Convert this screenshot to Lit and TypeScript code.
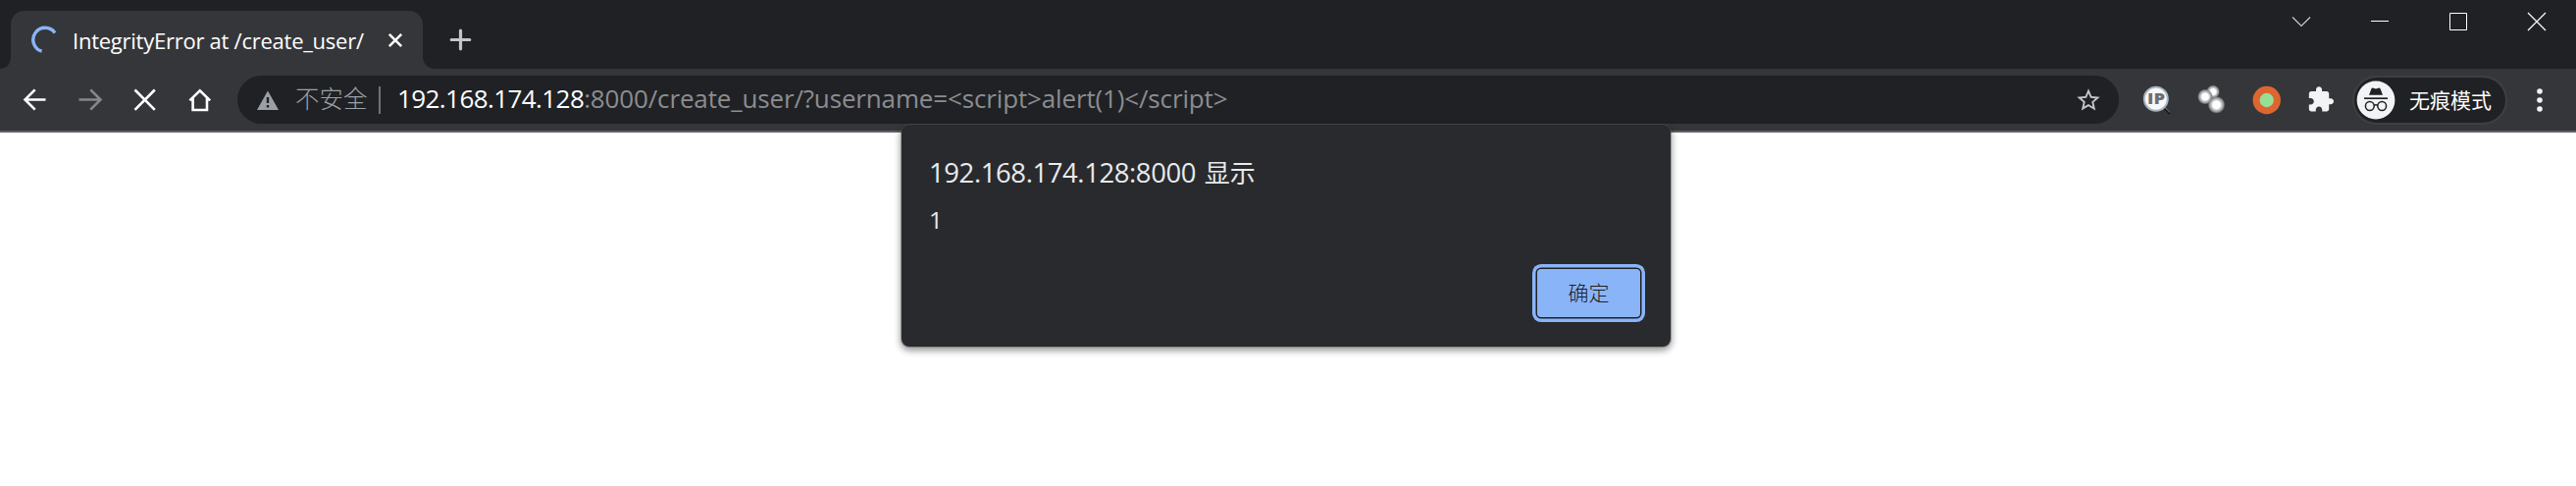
import { LitElement, html, css } from 'lit';
import { customElement, property } from 'lit/decorators.js';

const FONT = css`"Open Sans", "Noto Sans CJK SC", sans-serif`;

@customElement('tab-strip')
class TabStrip extends LitElement {
  @property() heading = '';

  static styles = css`
    :host { display: flex; height: 70px; background: #202124; font-family: ${FONT}; box-sizing: border-box; }
    svg { display: block; flex: none; }
    .foot { align-self: flex-end; color: #35363a; }
    .tab { width: 420px; margin-top: 11px; height: 59px; box-sizing: border-box; background: #35363a;
      border-radius: 14px 14px 0 0; display: flex; align-items: center; padding: 0 20px 0 20px; }
    .title { margin-left: 15px; width: 306px; white-space: nowrap; font-size: 22px; line-height: 30px; letter-spacing: -0.25px; color: #fff; }
    .close { margin-left: 15px; }
    .plus { margin: 29px 0 0 14px; }
    .controls { margin-left: auto; display: flex; gap: 60px; padding: 11px 30px 0 0; }
  `;

  render() {
    return html`
      <svg class="foot" width="11" height="13"><path d="M0 13C7 13 11 8 11 0V13Z" fill="currentColor" /></svg>
      <div class="tab">
        <svg width="28" height="30" viewBox="0 0 28 30">
          <path d="M25 7.5A12.2 12.2 0 1 0 11.6 26.2" fill="none" stroke="#8ab4f8" stroke-width="3.4" />
        </svg>
        <span class="title">${this.heading}</span>
        <svg class="close" width="16" height="16" viewBox="0 0 16 16">
          <path d="M1.8 1.8L14.2 14.2M14.2 1.8L1.8 14.2" stroke="#fff" stroke-width="2.6" />
        </svg>
      </div>
      <svg class="foot" width="13" height="13"><path d="M13 13C5 13 0 8 0 0V13Z" fill="currentColor" /></svg>
      <svg class="plus" width="23" height="23" viewBox="0 0 23 23">
        <path d="M11.5 2.2V20.8M2.2 11.5H20.8" stroke="#c3c5c8" stroke-width="3.2" stroke-linecap="round" />
      </svg>
      <div class="controls">
        <svg width="20" height="22" viewBox="0 0 20 22"><path d="M1 6.5L10 15.5L19 6.5" fill="none" stroke="#c9cacc" stroke-width="1.2" /></svg>
        <svg width="20" height="22" viewBox="0 0 20 22"><path d="M1 10.5H19" stroke="#fff" /></svg>
        <svg width="20" height="22" viewBox="0 0 20 22"><path d="M1.5 2.5H18.5V19.5H1.5Z" fill="none" stroke="#fff" /></svg>
        <svg width="20" height="22" viewBox="0 0 20 22"><path d="M1 2L19 20M19 2L1 20" stroke="#fff" stroke-width="1.2" /></svg>
      </div>
    `;
  }
}

@customElement('address-bar')
class AddressBar extends LitElement {
  @property() host = '';
  @property() path = '';

  static styles = css`
    :host { display: flex; align-items: center; height: 49px; width: 1918px; box-sizing: border-box; border-radius: 25px;
      background: #202124; padding: 0 17px 0 19px; font-family: ${FONT}; white-space: nowrap; }
    svg { display: block; flex: none; }
    .state { margin-left: 16px; width: 74px; font-size: 24.5px; line-height: 36px; padding-bottom: 1px; font-weight: 300; color: #9aa0a6; }
    .sep { width: 2px; height: 28px; margin: 0 17px 0 11px; background: #6f7378; }
    .url { font-size: 26px; line-height: 36px; padding-bottom: 3px; color: #8b8d91; letter-spacing: -0.15px; }
    .host { color: #fff; letter-spacing: -0.58px; }
    .star { margin-left: auto; }
  `;

  render() {
    return html`
      <svg width="24" height="22" viewBox="0 0 24 22">
        <path d="M12 1.5L23 21H1Z" fill="#9aa0a6" />
        <path d="M12 8V14M12 16V18.6" stroke="#202124" stroke-width="2.4" />
      </svg>
      <span class="state">不安全</span>
      <span class="sep"></span>
      <span class="url"><span class="host">${this.host}</span>${this.path}</span>
      <svg class="star" width="28" height="28" viewBox="0 0 24 24">
        <path fill="#c4c6c9" d="M22 9.24l-7.19-.62L12 2 9.19 8.63 2 9.24l5.46 4.73L5.82 21 12 17.27 18.18 21l-1.63-7.03L22 9.24zM12 15.4l-3.76 2.27 1-4.28-3.32-2.88 4.38-.38L12 6.1l1.71 4.04 4.38.38-3.32 2.88 1 4.28L12 15.4z" />
      </svg>
    `;
  }
}

@customElement('nav-buttons')
class NavButtons extends LitElement {
  static styles = css`
    :host { display: flex; gap: 28px; width: 220px; padding-left: 22px; box-sizing: border-box; }
    svg { display: block; flex: none; fill: none; stroke: #fff; stroke-width: 2.6; }
    .dim { stroke: #85878b; }
  `;

  render() {
    return html`
      <svg width="28" height="28" viewBox="0 0 28 28"><path d="M24.5 13.5H4M13.7 3.3L3.5 13.5L13.7 23.7" /></svg>
      <svg class="dim" width="28" height="28" viewBox="0 0 28 28"><path d="M2.5 13.5H23M14.3 3.3L24.5 13.5L14.3 23.7" /></svg>
      <svg width="28" height="28" viewBox="0 0 28 28"><path d="M3.5 3.5L23.8 23.8M23.8 3.5L3.5 23.8" /></svg>
      <svg width="28" height="28" viewBox="0 0 28 28"><path d="M3.4 14.4L13.8 4.2L24.2 14.4M6.6 12V24H21V12" /></svg>
    `;
  }
}

@customElement('extension-icons')
class ExtensionIcons extends LitElement {
  static styles = css`
    :host { display: flex; align-items: center; gap: 24px; margin-left: 23px; }
    svg { display: block; flex: none; }
    .ip { font: 800 15px "Open Sans", sans-serif; fill: #6d6f72; }
  `;

  render() {
    return html`
      <svg width="32" height="32" viewBox="0 0 32 32">
        <path d="M22.5 23.5L29 30" stroke="#15171a" stroke-width="2" />
        <path d="M23.5 23L28.8 28.2" stroke="#8b9094" stroke-width="0.9" />
        <circle cx="14.8" cy="14.8" r="12" fill="#f8f9fa" stroke="#a9b6be" stroke-width="2" />
        <text class="ip" x="15" y="20.2" text-anchor="middle" textLength="18" lengthAdjust="spacingAndGlyphs">IP</text>
      </svg>
      <svg width="32" height="32" viewBox="0 0 32 32">
        <defs>
          <radialGradient id="glow">
            <stop offset="0" stop-color="#fff" />
            <stop offset=".42" stop-color="#fff" />
            <stop offset=".56" stop-color="#cfcfd0" />
            <stop offset=".82" stop-color="#8b8c8e" />
            <stop offset="1" stop-color="#77787a" stop-opacity="0" />
          </radialGradient>
        </defs>
        <circle cx="17" cy="7.5" r="7" fill="url(#glow)" />
        <circle cx="9" cy="12.5" r="8" fill="url(#glow)" />
        <circle cx="20.5" cy="20.8" r="9" fill="url(#glow)" />
      </svg>
      <svg width="32" height="32" viewBox="0 0 32 32">
        <circle cx="15.7" cy="16" r="14.2" fill="#dd6630" />
        <circle cx="15.7" cy="16" r="7.2" fill="#97df97" />
      </svg>
      <svg width="32" height="32" viewBox="0 0 24 24">
        <path fill="#f1f3f4" transform="translate(.3 .8) scale(.9)" d="M20.5 11H19V7c0-1.1-.9-2-2-2h-4V3.5C13 2.12 11.88 1 10.5 1S8 2.12 8 3.5V5H4c-1.1 0-1.99.9-1.99 2v3.8H3.5c1.49 0 2.7 1.21 2.7 2.7s-1.21 2.7-2.7 2.7H2V20c0 1.1.9 2 2 2h3.8v-1.5c0-1.49 1.21-2.7 2.7-2.7 1.49 0 2.7 1.21 2.7 2.7V22H17c1.1 0 2-.9 2-2v-4h1.5c1.38 0 2.5-1.12 2.5-2.5S21.88 11 20.5 11z" />
      </svg>
    `;
  }
}

@customElement('incognito-badge')
class IncognitoBadge extends LitElement {
  static styles = css`
    :host { display: flex; align-items: center; box-sizing: border-box; width: 158px; height: 50px; margin-left: 15px;
      border: 2px solid #3e3f43; border-radius: 25px; background: #202124; padding-left: 2px; color: #fff;
      font: 21px/30px ${FONT}; white-space: nowrap; }
    svg { display: block; flex: none; }
    .label { margin-left: 14px; padding-top: 1px; }
  `;

  render() {
    return html`
      <svg width="40" height="40" viewBox="0 0 40 40">
        <circle cx="20" cy="20" r="19.4" fill="#f1f3f4" />
        <path d="M13 14.8L15.4 8.6Q16 7.2 17.4 7.8L20 8.4L22.6 7.8Q24 7.2 24.6 8.6L27 14.8Z" fill="#202124" />
        <path d="M8 18.2H32" stroke="#202124" stroke-width="1.7" />
        <g fill="none" stroke="#202124" stroke-width="1.5">
          <circle cx="13.8" cy="26" r="4.4" /><circle cx="26.2" cy="26" r="4.4" /><path d="M18 25.4Q20 24 22 25.4" />
        </g>
      </svg>
      <span class="label">无痕模式</span>
    `;
  }
}

@customElement('alert-dialog')
class AlertDialog extends LitElement {
  @property() origin = '';
  @property() message = '';

  static styles = css`
    :host { display: flex; flex-direction: column; box-sizing: border-box; width: 784px; height: 226px; padding: 29px 26px 0 28px;
      background: #292a2d; border-radius: 8px; box-shadow: 0 0 0 1px rgba(95, 96, 100, .45), 0 3px 7px 1px rgba(0, 0, 0, .42);
      font-family: ${FONT}; color: #e8eaed; }
    .origin { font-size: 27.5px; line-height: 40px; letter-spacing: -0.42px; white-space: nowrap; }
    .cjk { font-size: 26px; letter-spacing: 0; margin-left: 2px; }
    .message { font-size: 24.5px; line-height: 36px; margin-top: 10px; }
    .ok { align-self: flex-end; margin-top: 32px; width: 105px; height: 49px; border: 0; border-radius: 4px; padding: 0 0 1px;
      margin-right: 5px; background: #8ab4f8; color: #202124; font: 300 21px/30px ${FONT};
      box-shadow: 0 0 0 1.5px #202124, 0 0 0 5px #8ab4f8; }
  `;

  render() {
    return html`
      <div class="origin">${this.origin} <span class="cjk">显示</span></div>
      <div class="message">${this.message}</div>
      <button class="ok">确定</button>
    `;
  }
}

@customElement('app-root')
class AppRoot extends LitElement {
  static styles = css`
    :host { display: block; position: relative; width: 100%; height: 495px; overflow: hidden; background: #fff; }
    .toolbar { display: flex; align-items: center; height: 65px; box-sizing: border-box; background: #35363a; border-bottom: 2px solid #5f6064; }
    .bar { margin-left: 22px; }
    .menu { margin-left: 29px; }
    .dialog { position: absolute; top: 127px; left: 50%; margin-left: -394px; }
  `;

  render() {
    return html`
      <tab-strip heading="IntegrityError at /create_user/"></tab-strip>
      <div class="toolbar">
        <nav-buttons></nav-buttons>
        <address-bar class="bar" host="192.168.174.128" path=":8000/create_user/?username=<script>alert(1)</script>"></address-bar>
        <extension-icons></extension-icons>
        <incognito-badge></incognito-badge>
        <svg class="menu" width="8" height="26" viewBox="0 0 8 26">
          <g fill="#f1f3f4"><circle cx="4" cy="4" r="2.8" /><circle cx="4" cy="13" r="2.8" /><circle cx="4" cy="22" r="2.8" /></g>
        </svg>
      </div>
      <alert-dialog class="dialog" origin="192.168.174.128:8000" message="1"></alert-dialog>
    `;
  }
}
